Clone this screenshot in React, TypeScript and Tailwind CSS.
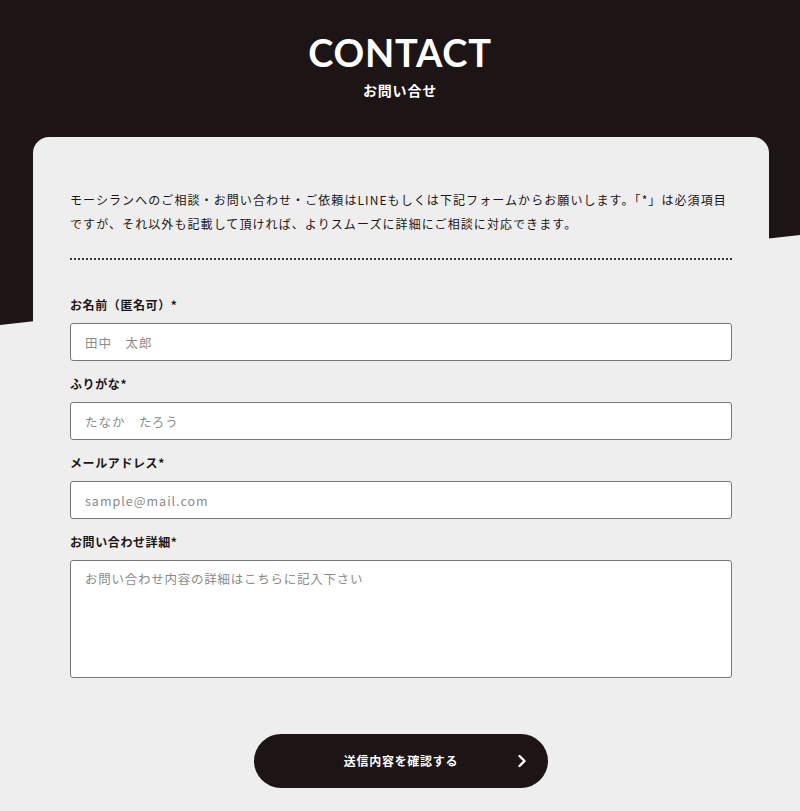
import React from "react";

const jp = "font-['Noto_Sans_CJK_JP','Noto_Sans',sans-serif]";

const fields = [
  { label: "お名前（匿名可）*", placeholder: "田中　太郎" },
  { label: "ふりがな*", placeholder: "たなか　たろう" },
  { label: "メールアドレス*", placeholder: "sample@mail.com" },
];

export default function App() {
  return (
    <div className={`relative min-h-[811px] bg-[#eeeeee] ${jp}`}>
      {/* slanted dark backdrop */}
      <div className="absolute inset-x-0 top-0 h-[330px] bg-[#1c1415] [clip-path:polygon(0_0,100%_0,100%_235px,0_325px)]" />

      <div className="relative">
        <header className="flex h-[137px] flex-col items-center pt-[30px] text-white">
          <h1 className="font-['Lato',sans-serif] text-[38px] font-bold leading-[44px] tracking-[0.02em]">
            CONTACT
          </h1>
          <p className="mt-[6px] text-[14px] font-bold leading-5 tracking-[0.06em]">お問い合せ</p>
        </header>

        <main className="mx-[33px] w-[736px] rounded-t-[16px] bg-[#eeeeee] px-[37px] pt-[51px] pb-[23px] text-[#1c1415]">
          <p className="text-[12px] leading-[24px] tracking-[0.09em]">
            モーシランへのご相談・お問い合わせ・ご依頼はLINEもしくは下記フォームからお願いします。「*」は必須項目
            <br />
            ですが、それ以外も記載して頂ければ、よりスムーズに詳細にご相談に対応できます。
          </p>
          <div className="mt-[22px] border-t-2 border-dotted border-[#333]" />

          <form className="mt-[35px] flex flex-col gap-[13px]">
            {fields.map((f) => (
              <label key={f.label} className="flex flex-col">
                <span className="mb-2 text-[12px] font-bold leading-5 tracking-[0.05em]">{f.label}</span>
                <input
                  placeholder={f.placeholder}
                  className="h-[38px] rounded-[3px] border border-[#777] bg-white px-[14px] text-[12.5px] tracking-[0.08em] placeholder:text-[#8a8a8a] focus:outline-none"
                />
              </label>
            ))}
            <label className="flex flex-col">
              <span className="mb-2 text-[12px] font-bold leading-5 tracking-[0.05em]">お問い合わせ詳細*</span>
              <textarea
                placeholder="お問い合わせ内容の詳細はこちらに記入下さい"
                className="h-[118px] resize-none rounded-[3px] border border-[#777] bg-white px-[14px] py-[8px] text-[12.5px] leading-5 tracking-[0.06em] placeholder:text-[#8a8a8a] focus:outline-none"
              />
            </label>

            <div className="mt-[43px] flex justify-center">
              <button
                type="button"
                className="relative flex h-[54px] w-[294px] items-center justify-center rounded-full bg-[#1c1415] text-[12px] font-bold tracking-[0.06em] text-white"
              >
                送信内容を確認する
                <svg
                  className="absolute right-[20px] top-1/2 -translate-y-1/2"
                  width="12"
                  height="14"
                  viewBox="0 0 12 14"
                  fill="none"
                  stroke="white"
                  strokeWidth="2.4"
                  strokeLinecap="round"
                  strokeLinejoin="round"
                >
                  <path d="M3.5 2 L8.5 7 L3.5 12" />
                </svg>
              </button>
            </div>
          </form>
        </main>
      </div>
    </div>
  );
}
